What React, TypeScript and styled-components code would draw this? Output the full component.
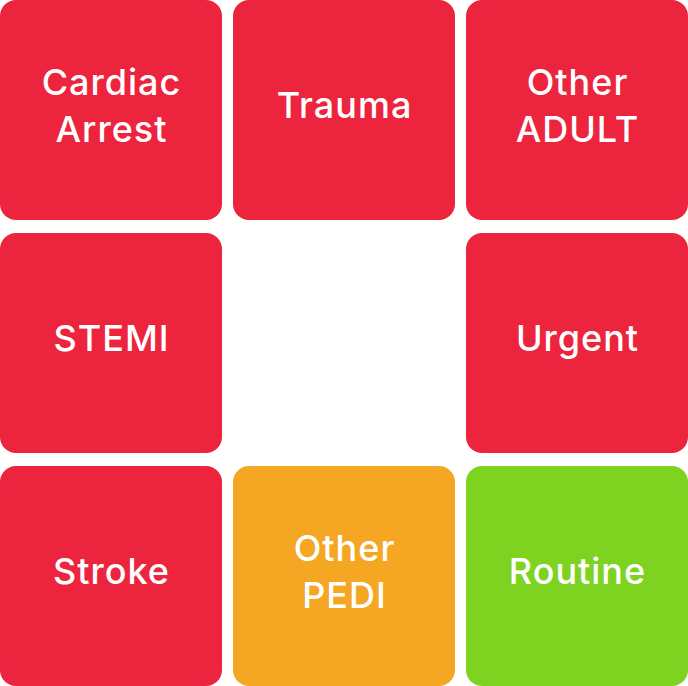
import styled, { createGlobalStyle } from 'styled-components';

type Tone = 'red' | 'orange' | 'green';

interface TileData {
  label: string[];
  tone?: Tone;
}

const tones: Record<Tone, string> = {
  red: '#ED243E',
  orange: '#F5A623',
  green: '#7ED321',
};

const tiles: (TileData | null)[] = [
  { label: ['Cardiac', 'Arrest'], tone: 'red' },
  { label: ['Trauma'], tone: 'red' },
  { label: ['Other', 'ADULT'], tone: 'red' },
  { label: ['STEMI'], tone: 'red' },
  null,
  { label: ['Urgent'], tone: 'red' },
  { label: ['Stroke'], tone: 'red' },
  { label: ['Other', 'PEDI'], tone: 'orange' },
  { label: ['Routine'], tone: 'green' },
];

function App() {
  return (
    <>
      <GlobalStyle />
      <Grid>
        {tiles.map((tile, i) =>
          tile ? (
            <Tile key={i} $tone={tile.tone ?? 'red'}>
              <Label>
                {tile.label.map((line) => (
                  <span key={line}>{line}</span>
                ))}
              </Label>
            </Tile>
          ) : (
            <Empty key={i} />
          )
        )}
      </Grid>
    </>
  );
}

export default App;

const GlobalStyle = createGlobalStyle`
  html, body {
    margin: 0;
    padding: 0;
    background: #FFFFFF;
  }
`;

const Grid = styled.div`
  display: grid;
  grid-template-columns: 222px 222px 222px;
  grid-template-rows: 220px 220px 220px;
  column-gap: 11px;
  row-gap: 13px;
  width: 688px;
`;

const Tile = styled.button<{ $tone: Tone }>`
  display: flex;
  justify-content: center;
  align-items: center;
  border: none;
  padding: 0;
  border-radius: 16px;
  background: ${(p) => tones[p.$tone]};
  cursor: pointer;
`;

const Empty = styled.div``;

const Label = styled.div`
  display: flex;
  flex-direction: column;
  align-items: center;
  font-family: Inter, 'Noto Sans', sans-serif;
  font-weight: 500;
  font-size: 36px;
  line-height: 47px;
  letter-spacing: 1px;
  color: #FFFFFF;
  text-align: center;
  margin-top: -9px;
  margin-right: -1px;
`;
